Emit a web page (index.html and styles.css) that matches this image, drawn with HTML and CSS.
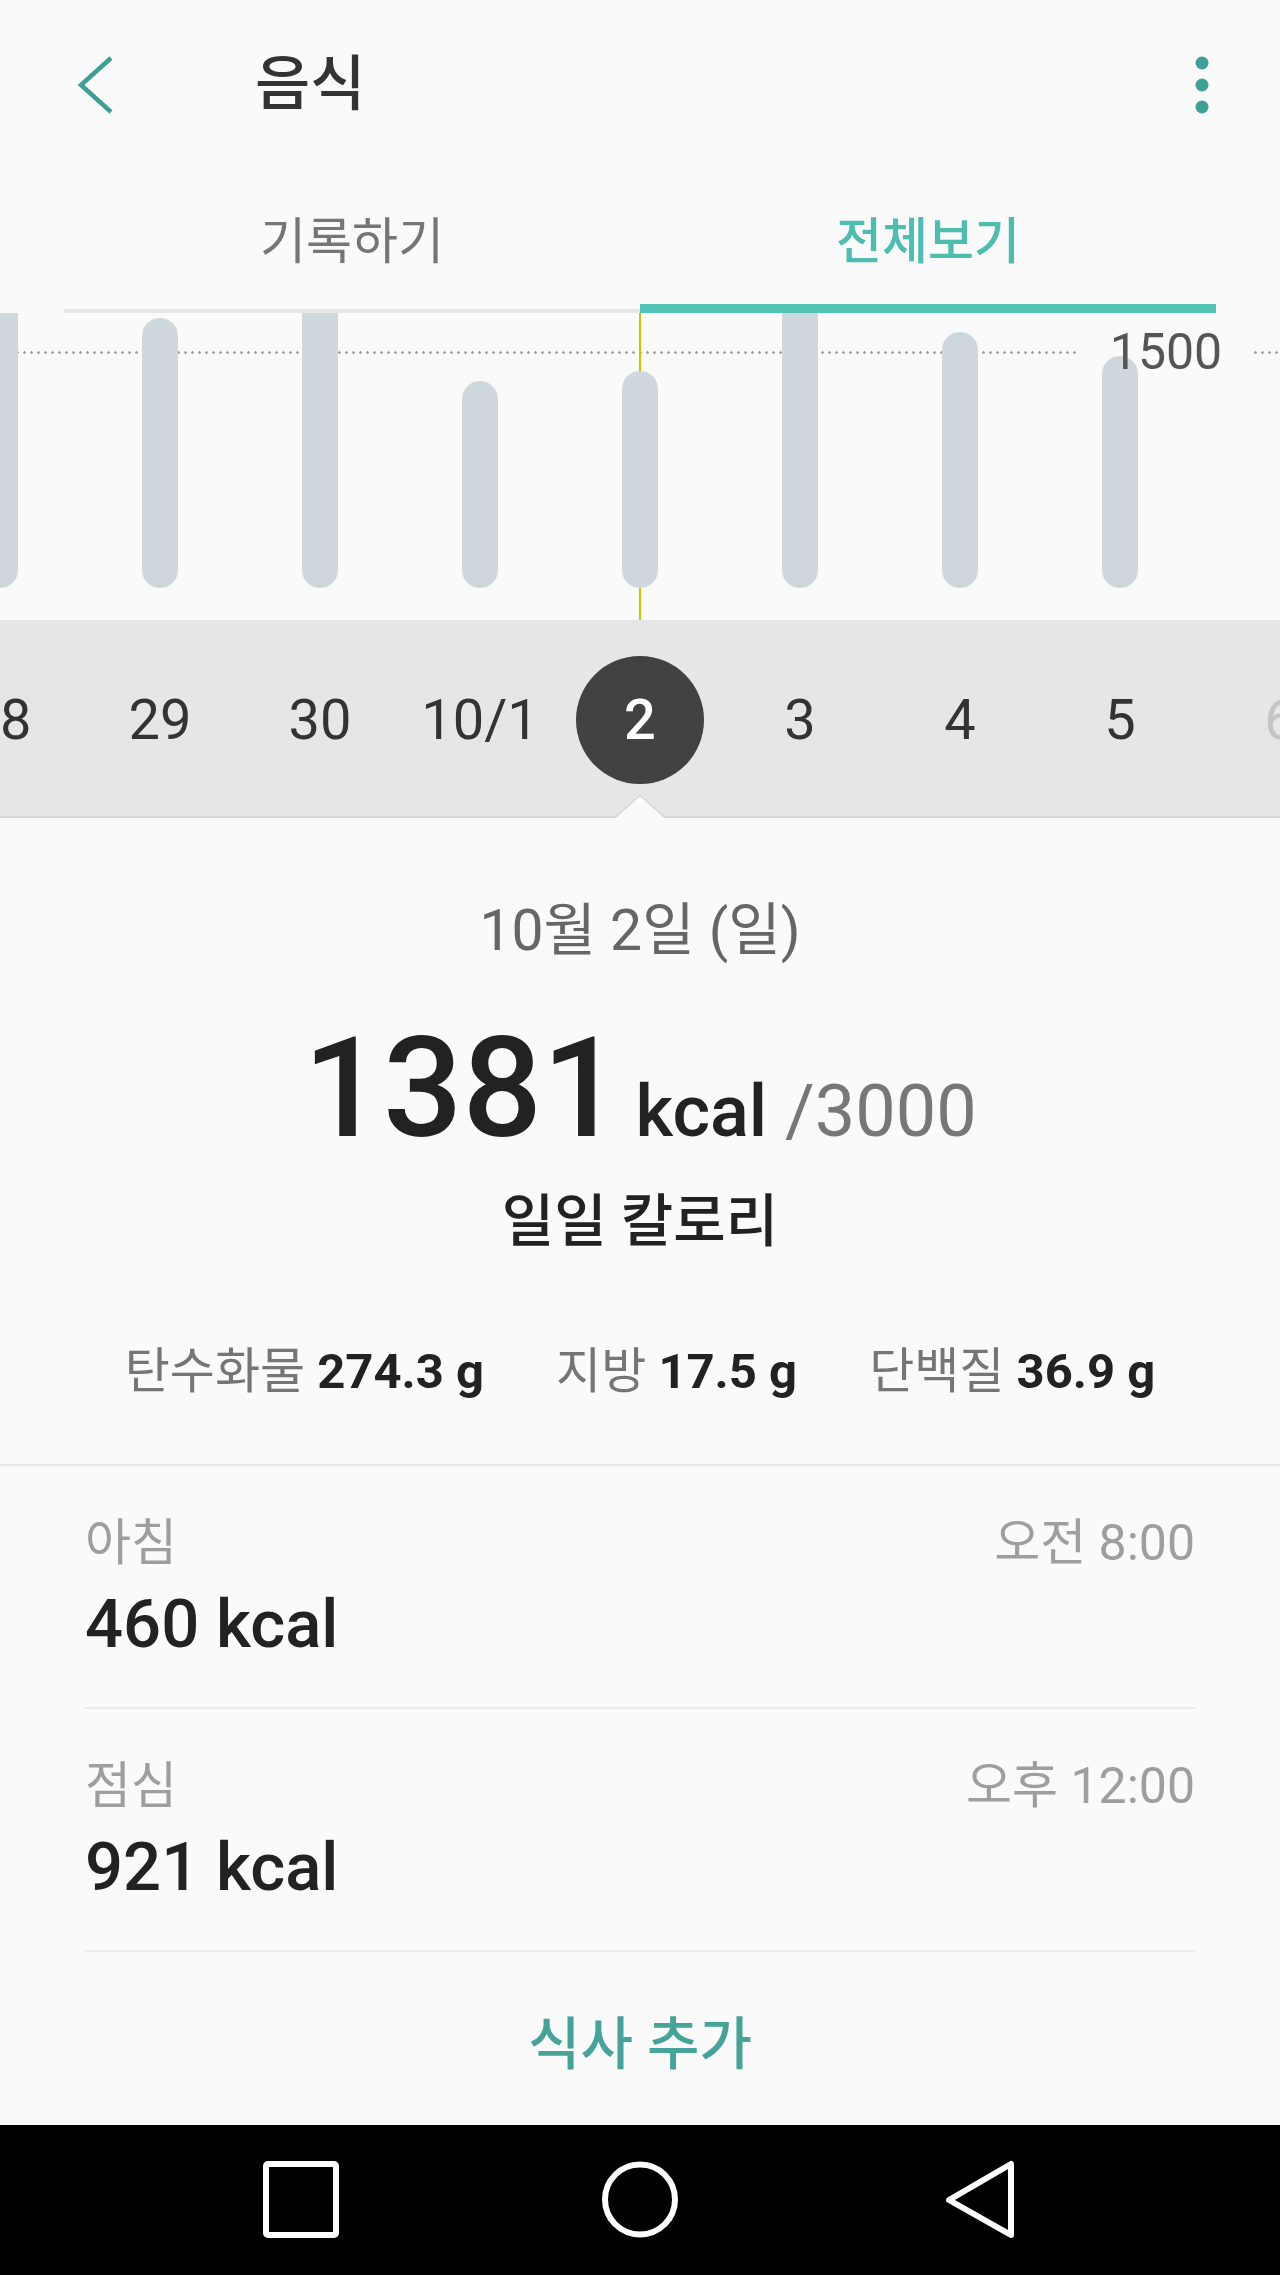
FILE: index.html
```html
<!DOCTYPE html>
<html lang="ko">
<head>
    <meta charset="UTF-8">
    <title>음식 - 전체보기</title>
    <link rel="stylesheet" href="styles.css">
</head>
<body>
    <header class="appbar">
        <button class="appbar-back" aria-label="뒤로">
            <svg width="40" height="64" viewBox="0 0 40 64">
                <polyline points="35,5 5,32 35,59" fill="none" stroke="#3f9f95" stroke-width="4.5"/>
            </svg>
        </button>
        <h1 class="appbar-title">음식</h1>
        <button class="appbar-menu" aria-label="메뉴">
            <svg width="20" height="60" viewBox="0 0 20 60">
                <circle cx="10" cy="8" r="6.5" fill="#40a096"/>
                <circle cx="10" cy="30" r="6.5" fill="#40a096"/>
                <circle cx="10" cy="52" r="6.5" fill="#40a096"/>
            </svg>
        </button>
    </header>

    <nav class="tabs">
        <div class="tab">기록하기</div>
        <div class="tab tab-active">전체보기</div>
    </nav>

    <section class="chart">
        <div class="chart-goal chart-goal-left"></div>
        <div class="chart-goal chart-goal-right"></div>
        <div class="chart-cursor"></div>
        <div class="chart-bars">
            <div class="chart-col"><div class="bar" style="height:300px"></div></div>
            <div class="chart-col"><div class="bar" style="height:270px"></div></div>
            <div class="chart-col"><div class="bar" style="height:300px"></div></div>
            <div class="chart-col"><div class="bar" style="height:207px"></div></div>
            <div class="chart-col"><div class="bar" style="height:217px"></div></div>
            <div class="chart-col"><div class="bar" style="height:300px"></div></div>
            <div class="chart-col"><div class="bar" style="height:256px"></div></div>
            <div class="chart-col"><div class="bar" style="height:232px"></div></div>
            <div class="chart-col"></div>
        </div>
        <div class="chart-goal-label">1500</div>
    </section>

    <div class="days">
        <div class="days-row">
            <div class="day">28</div>
            <div class="day">29</div>
            <div class="day">30</div>
            <div class="day">10/1</div>
            <div class="day day-selected"><span>2</span></div>
            <div class="day">3</div>
            <div class="day">4</div>
            <div class="day">5</div>
            <div class="day day-future">6</div>
        </div>
        <svg class="days-notch" width="48" height="24" viewBox="0 0 48 24">
            <polygon points="0,24 24,2 48,24" fill="#fafafa"/>
            <polyline points="0,22.5 24,1.5 48,22.5" fill="none" stroke="#d8d8d8" stroke-width="1.5"/>
        </svg>
    </div>

    <section class="summary">
        <div class="summary-date">10월 2일 (일)</div>
        <div class="summary-total">1381<span class="summary-unit">kcal <span class="summary-goal">/3000</span></span></div>
        <div class="summary-label">일일 칼로리</div>
        <div class="macros">
            <span class="macro">탄수화물 <b>274.3 g</b></span>
            <span class="macro">지방 <b>17.5 g</b></span>
            <span class="macro">단백질 <b>36.9 g</b></span>
        </div>
    </section>

    <section class="meals">
        <div class="meal">
            <div class="meal-head">
                <span>아침</span>
                <span>오전 8:00</span>
            </div>
            <div class="meal-kcal">460 kcal</div>
        </div>
        <div class="meal">
            <div class="meal-head">
                <span>점심</span>
                <span>오후 12:00</span>
            </div>
            <div class="meal-kcal">921 kcal</div>
        </div>
    </section>

    <button class="add-meal">식사 추가</button>

    <footer class="navbar">
        <svg width="80" height="80" viewBox="0 0 80 80">
            <rect x="5" y="4" width="70" height="71" rx="2" fill="none" stroke="#fff" stroke-width="6"/>
        </svg>
        <svg width="80" height="80" viewBox="0 0 80 80">
            <circle cx="40" cy="39.5" r="35" fill="none" stroke="#fff" stroke-width="6"/>
        </svg>
        <svg width="80" height="80" viewBox="0 0 80 80">
            <polygon points="72,4 72,75 10,40" fill="none" stroke="#fff" stroke-width="6" stroke-linejoin="round"/>
        </svg>
    </footer>
</body>
</html>
```

FILE: styles.css
```css
body {
    margin: 0;
    min-height: 2275px;
    display: flex;
    flex-direction: column;
    background-color: #fafafa;
    font-family: 'Roboto', 'Noto Sans CJK KR', sans-serif;
    color: #222;
    overflow: hidden;
}
button {
    background: none;
    border: none;
    padding: 0;
    font-family: inherit;
    cursor: pointer;
}

/* app bar */
.appbar {
    height: 170px;
    display: flex;
    align-items: center;
    padding: 0 68px 0 76px;
}
.appbar-back svg,
.appbar-menu svg {
    display: block;
}
.appbar-title {
    flex: 1;
    margin: 0 0 0 139px;
    font-size: 60px;
    font-weight: 500;
    line-height: 64px;
    color: #333;
}

/* tabs */
.tabs {
    display: flex;
    margin: 0 64px;
}
.tab {
    flex: 1;
    height: 143px;
    box-sizing: border-box;
    padding-top: 44px;
    text-align: center;
    font-size: 50px;
    line-height: 56px;
    color: #757575;
    box-shadow: inset 0 -4px #e8e8e8;
}
.tab-active {
    color: #4dbdaf;
    font-weight: 500;
    box-shadow: inset 0 -9px #52c4b6;
}

/* chart */
.chart {
    position: relative;
    height: 307px;
    overflow: hidden;
}
.chart-goal {
    position: absolute;
    top: 38px;
    height: 3px;
    background-image: radial-gradient(circle, #a0a0a0 1.1px, transparent 1.5px);
    background-size: 7px 3px;
    background-repeat: repeat-x;
}
.chart-goal-left {
    left: 0;
    width: 1080px;
}
.chart-goal-right {
    left: 1252px;
    right: 0;
}
.chart-goal-label {
    position: absolute;
    top: 14px;
    left: 1080px;
    width: 172px;
    text-align: center;
    font-size: 50px;
    line-height: 50px;
    color: #555;
}
.chart-cursor {
    position: absolute;
    top: 0;
    bottom: 0;
    left: 639px;
    width: 2px;
    background-color: #c3c800;
}
.chart-bars {
    position: relative;
    display: flex;
    align-items: flex-end;
    height: 100%;
    margin-left: -80px;
    padding-bottom: 32px;
    box-sizing: border-box;
}
.chart-col {
    flex: 0 0 160px;
    display: flex;
    justify-content: center;
}
.bar {
    width: 36px;
    border-radius: 18px;
    background-color: #cfd8dd;
}

/* date strip */
.days {
    position: relative;
    height: 192px;
    padding-top: 4px;
    background-color: #e6e6e6;
    border-bottom: 2px solid #d6d6d6;
}
.days-row {
    display: flex;
    height: 100%;
    margin-left: -80px;
}
.day {
    flex: 0 0 160px;
    display: flex;
    align-items: center;
    justify-content: center;
    font-size: 56px;
    color: #333;
}
.day-selected span {
    width: 128px;
    height: 128px;
    border-radius: 50%;
    display: flex;
    align-items: center;
    justify-content: center;
    background-color: #424242;
    color: #fff;
    font-weight: 500;
}
.day-future {
    color: #c4c4c4;
}
.days-notch {
    position: absolute;
    left: 616px;
    bottom: -2px;
    display: block;
}

/* summary */
.summary {
    text-align: center;
    padding: 83px 0 64px;
    border-bottom: 2px solid #e8e8e8;
}
.summary-date {
    font-size: 57px;
    line-height: 60px;
    color: #666;
}
.summary-total {
    margin-top: 55px;
    font-size: 140px;
    font-weight: 500;
    line-height: 144px;
    color: #222;
}
.summary-unit {
    margin-left: 14px;
    font-size: 72px;
    line-height: 72px;
}
.summary-goal {
    color: #777;
    font-weight: 400;
}
.summary-label {
    margin-top: 32px;
    font-size: 57px;
    font-weight: 500;
    line-height: 60px;
    color: #222;
}
.macros {
    display: flex;
    justify-content: center;
    gap: 72px;
    margin-top: 92px;
    font-size: 49px;
    line-height: 56px;
    color: #757575;
}
.macro b {
    color: #222;
    font-weight: 700;
}

/* meals */
.meals {
    padding: 0 85px;
}
.meal {
    padding: 49px 0 47px;
    border-bottom: 2px solid #ebebeb;
}
.meal-head {
    display: flex;
    justify-content: space-between;
    font-size: 50px;
    line-height: 56px;
    color: #9e9e9e;
}
.meal-kcal {
    margin-top: 17px;
    font-size: 67px;
    font-weight: 500;
    line-height: 72px;
    color: #222;
}

.add-meal {
    flex: 1;
    font-size: 57px;
    font-weight: 500;
    color: #45a399;
}

/* system nav */
.navbar {
    height: 150px;
    display: flex;
    align-items: center;
    justify-content: center;
    gap: 259px;
    background-color: #000;
}
```
